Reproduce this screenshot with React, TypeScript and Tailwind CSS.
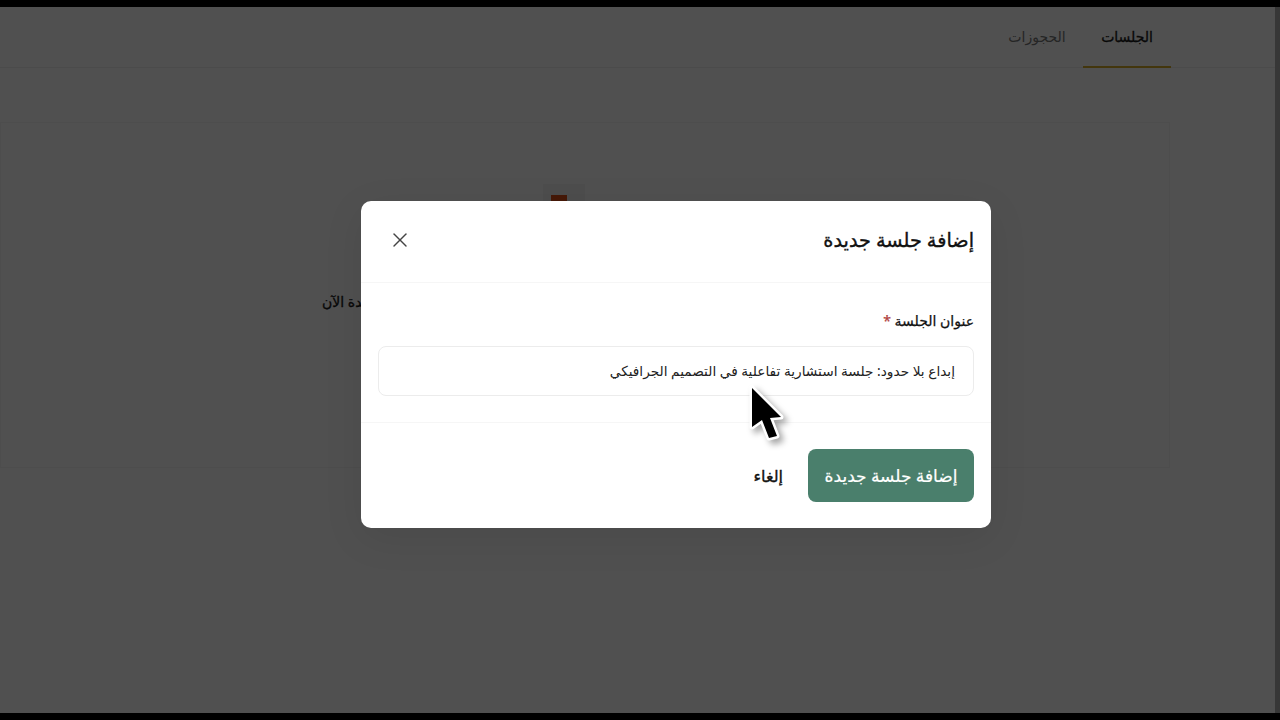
import { X } from "lucide-react"

const font = { fontFamily: '"Noto Sans", "DejaVu Sans", "Liberation Sans", sans-serif' }

// マウスカーソル
function Cursor() {
  return (
    <svg width="48" height="68" viewBox="0 0 48 68" className="absolute left-[746px] top-[381px] drop-shadow-[4px_4px_3px_rgba(0,0,0,0.35)]">
      <path d="M6 7 L6 46 L16 39 L23 57 L31 55 L24 37 L35 36 Z" fill="#000" stroke="#fff" strokeWidth="5" strokeLinejoin="round" paintOrder="stroke" />
    </svg>
  )
}

export default function App() {
  return (
    <div dir="rtl" style={font} className="relative w-[1280px] h-[720px] overflow-hidden bg-black py-[7px]">
      {/* 背景ページ */}
      <div className="flex h-full bg-white">
        <div className="w-[5px] bg-[#aeaeae]" />
        <div className="flex-1 flex flex-col">
          <div className="h-[61px] flex items-end pr-[104px] border-b border-[#f0f0f0]">
            <div className="w-[88px] h-[60px] flex items-center justify-center border-b-2 border-[#d4ac2a] -mb-px text-sm text-[#1a1a1a] [-webkit-text-stroke:0.3px]">الجلسات</div>
            <div className="w-[92px] h-[60px] flex items-center justify-center text-sm text-[#777777]">الحجوزات</div>
          </div>
          <div className="flex-1 pt-[54px] pr-[105px]">
            <div className="h-[346px] bg-[#fdfdfd] border border-[#f5f5f5] flex flex-col items-center pt-[61px] pr-[42px]">
              <div className="w-[42px] h-[40px] bg-[#f6f6f6] flex justify-start pt-[11px] pr-[18px]">
                <div className="w-4 h-6 shrink-0 bg-[#e0521c]" />
              </div>
              <p className="mt-[68px] w-[484px] text-left text-sm text-[#1a1a1a] whitespace-nowrap [-webkit-text-stroke:0.3px]">قم بإضافة جلسة جديدة الآن</p>
            </div>
          </div>
        </div>
      </div>

      {/* オーバーレイ */}
      <div className="absolute inset-x-0 top-[7px] bottom-[7px] bg-black/[.685]" />

      {/* モーダル */}
      <div className="absolute left-[361px] top-[201px] w-[630px] h-[327px] bg-white rounded-[10px] shadow-[0_10px_40px_rgba(0,0,0,0.08)] flex flex-col">
        <div className="h-[82px] shrink-0 flex items-center justify-between px-[17px] pb-[3px] border-b border-[#f6f6f6]">
          <h2 className="text-[19.3px] text-[#111111] [-webkit-text-stroke:0.35px]">إضافة جلسة جديدة</h2>
          <button type="button" className="ml-[10px] text-[#444444]"><X size={24} strokeWidth={1.4} /></button>
        </div>
        <div className="h-[140px] shrink-0 px-[17px] pt-[28px] border-b border-[#f6f6f6]">
          <label className="block h-[35px] text-sm text-[#111111] [-webkit-text-stroke:0.25px]">
            عنوان الجلسة <span className="text-[#b0413e]">*</span>
          </label>
          <div className="h-[50px] flex items-center px-[18px] border border-[#ececec] rounded-lg text-[13.7px] text-[#222222]">
            إبداع بلا حدود: جلسة استشارية تفاعلية في التصميم الجرافيكي
          </div>
        </div>
        <div className="flex-1 flex items-start gap-[25px] px-[17px] pt-[26px]">
          <button type="button" className="w-[166px] h-[53px] rounded-lg bg-[#4a7f6c] text-white text-[17px] [-webkit-text-stroke:0.2px]">إضافة جلسة جديدة</button>
          <button type="button" className="h-[53px] text-base text-[#111111] [-webkit-text-stroke:0.35px]">إلغاء</button>
        </div>
      </div>

      <Cursor />
    </div>
  )
}
